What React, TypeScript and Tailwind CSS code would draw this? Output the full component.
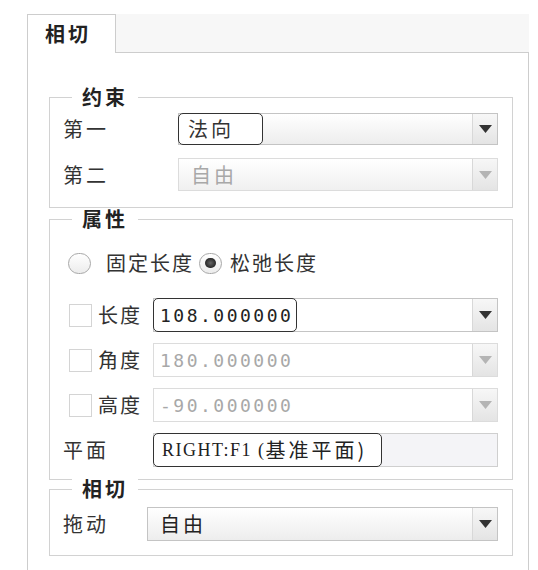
import React from 'react'

function Arrow({ disabled }: { disabled?: boolean }) {
  return (
    <div className="w-[25px] self-stretch border-l border-[#d8d8d8] bg-linear-to-b from-[#f7f7f7] to-[#e4e4e4] flex items-center justify-center">
      <svg width="13" height="8" viewBox="0 0 13 8">
        <path d="M0 0H13L6.5 8Z" fill={disabled ? '#b4b4b4' : '#333333'} />
      </svg>
    </div>
  )
}

function Legend({ text }: { text: string }) {
  return (
    <span className="absolute left-[22px] top-[-12px] bg-white px-[10px] font-['Noto_Sans_CJK_SC',sans-serif] font-bold text-[20px] leading-[22px] tracking-[3px] text-[#222]">
      {text}
    </span>
  )
}

function CheckBox() {
  return <div className="w-[23px] h-[23px] border border-[#d4d4d4] bg-white shrink-0" />
}

function Radio({ checked }: { checked?: boolean }) {
  return (
    <div className="w-[23px] h-[21px] rounded-full border-[1.5px] border-[#a8a8a8] bg-linear-to-b from-white to-[#ececec] flex items-center justify-center shrink-0">
      {checked && <div className="w-[11px] h-[10px] rounded-full bg-radial from-[#666] to-[#111]" />}
    </div>
  )
}

function App() {
  return (
    <div className="w-[538px] h-[570px] bg-white pl-[27px] pt-[14px] overflow-hidden font-['Noto_Sans_CJK_SC',sans-serif] text-[#333]">
      {/* tab strip */}
      <div className="flex w-[502px] h-[39px] border-b border-[#cdcdcd] bg-[#f7f7f7]">
        <div className="w-[89px] h-[39px] bg-white border border-b-0 border-[#cdcdcd] pl-[17px] flex items-center font-bold text-[20px] tracking-[3px] text-[#222]">
          相切
        </div>
      </div>

      <div className="w-[502px] h-[520px] border-x border-[#cdcdcd] pl-[21px] pt-[44px]">
        {/* 约束 */}
        <div className="relative w-[464px] border border-[#d2d2d2] pl-[13px] pt-[15px] pb-[16px] flex flex-col gap-[13px]">
          <Legend text="约束" />
          <div className="flex items-center h-[32px]">
            <span className="w-[115px] text-[20px] tracking-[3px]">第一</span>
            <div className="flex w-[320px] h-[32px] border border-[#c4c4c4] bg-linear-to-b from-white to-[#ededed]">
              <div className="flex-1 flex">
                <span className="w-[85px] h-[32px] -ml-px -mt-px border-[1.5px] border-[#333] rounded-[5px] bg-white pl-[9px] flex items-center text-[20px] tracking-[3px] text-[#333]">
                  法向
                </span>
              </div>
              <Arrow />
            </div>
          </div>
          <div className="flex items-center h-[33px]">
            <span className="w-[115px] text-[20px] tracking-[3px]">第二</span>
            <div className="flex w-[320px] h-[33px] border border-[#dcdcdc] bg-linear-to-b from-white to-[#f0f0f0]">
              <div className="flex-1 flex items-center pl-[12px] text-[20px] tracking-[3px] text-[#a8a8a8]">自由</div>
              <Arrow disabled />
            </div>
          </div>
        </div>

        {/* 属性 */}
        <div className="relative w-[464px] mt-[11px] border border-[#d2d2d2] pl-[13px] pt-[30px] pb-[12px]">
          <Legend text="属性" />
          <div className="flex items-center h-[26px] ml-[5px] text-[20px] tracking-[2px]">
            <Radio />
            <span className="ml-[15px]">固定长度</span>
            <span className="ml-[5px]"><Radio checked /></span>
            <span className="ml-[8px]">松弛长度</span>
          </div>

          <div className="mt-[22px] flex flex-col gap-[11px]">
            <div className="flex items-center h-[34px]">
              <div className="ml-[6px] mr-[6px]"><CheckBox /></div>
              <span className="w-[55px] text-[20px] tracking-[2px]">长度</span>
              <div className="flex w-[345px] h-[34px] border border-[#c4c4c4] bg-white">
                <div className="flex-1 flex">
                  <span className="w-[144px] h-[34px] -ml-px -mt-px border-[1.5px] border-[#333] rounded-[5px] pl-[6px] flex items-center font-['DejaVu_Sans_Mono',monospace] text-[18px] tracking-[2.5px] text-[#222]">
                    108.000000
                  </span>
                </div>
                <Arrow />
              </div>
            </div>
            <div className="flex items-center h-[34px]">
              <div className="ml-[6px] mr-[6px]"><CheckBox /></div>
              <span className="w-[55px] text-[20px] tracking-[2px]">角度</span>
              <div className="flex w-[345px] h-[34px] border border-[#dcdcdc] bg-white">
                <div className="flex-1 flex items-center pl-[6px] font-['DejaVu_Sans_Mono',monospace] text-[18px] tracking-[2.5px] text-[#a8a8a8]">
                  180.000000
                </div>
                <Arrow disabled />
              </div>
            </div>
            <div className="flex items-center h-[34px]">
              <div className="ml-[6px] mr-[6px]"><CheckBox /></div>
              <span className="w-[55px] text-[20px] tracking-[2px]">高度</span>
              <div className="flex w-[345px] h-[34px] border border-[#dcdcdc] bg-white">
                <div className="flex-1 flex items-center pl-[6px] font-['DejaVu_Sans_Mono',monospace] text-[18px] tracking-[2.5px] text-[#a8a8a8]">
                  -90.000000
                </div>
                <Arrow disabled />
              </div>
            </div>
            <div className="flex items-center h-[34px]">
              <span className="w-[90px] text-[20px] tracking-[3px]">平面</span>
              <div className="flex w-[345px] h-[34px] border border-[#cfcfcf] bg-[#f4f4f7]">
                <span className="w-[229px] h-[34px] -ml-px -mt-px border-[1.5px] border-[#333] rounded-[5px] bg-white pl-[8px] flex items-center text-[#222]">
                  <span className="font-['Liberation_Serif',serif] text-[18px] tracking-[1.5px]">RIGHT:F1&nbsp;(</span>
                  <span className="text-[20px] tracking-[3px]">基准平面</span>
                  <span className="text-[20px]">)</span>
                </span>
              </div>
            </div>
          </div>
        </div>

        {/* 相切 */}
        <div className="relative w-[464px] mt-[9px] border border-[#d2d2d2] pl-[13px] pt-[17px] pb-[14px]">
          <Legend text="相切" />
          <div className="flex items-center h-[34px]">
            <span className="w-[84px] text-[20px] tracking-[3px]">拖动</span>
            <div className="flex w-[351px] h-[34px] border border-[#c4c4c4] bg-linear-to-b from-white to-[#ededed]">
              <div className="flex-1 flex items-center pl-[12px] text-[20px] tracking-[3px] text-[#222]">自由</div>
              <Arrow />
            </div>
          </div>
        </div>
      </div>
    </div>
  )
}

export default App
